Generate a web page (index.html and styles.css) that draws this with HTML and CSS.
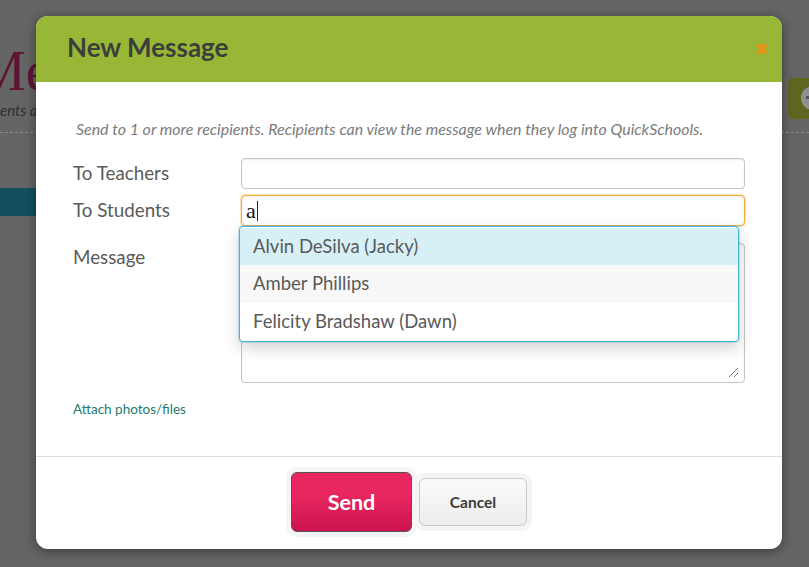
FILE: index.html
```html
<!DOCTYPE html>
<html lang="en">
<head>
    <meta charset="UTF-8">
    <title>New Message</title>
    <link rel="stylesheet" href="styles.css">
</head>
<body>
    <div class="page-behind">
        <div class="page-title">Me</div>
        <div class="page-sub">ents a</div>
        <div class="page-action"><span class="page-action-icon"></span></div>
        <div class="page-rule"></div>
        <div class="page-bar"></div>
    </div>

    <div class="modal">
        <div class="modal-header">
            <h1>New Message</h1>
            <svg class="close-icon" width="14" height="14" viewBox="0 0 14 14">
                <path d="M2.5 2.5L11.5 11.5M11.5 2.5L2.5 11.5" stroke="#ec8f12" stroke-width="3.4" fill="none"/>
            </svg>
        </div>
        <div class="modal-body">
            <p class="hint">Send to 1 or more recipients. Recipients can view the message when they log into QuickSchools.</p>
            <div class="form-row row-teachers">
                <label>To Teachers</label>
                <div class="field"></div>
            </div>
            <div class="form-row row-students">
                <label>To Students</label>
                <div class="field field-focus"><span class="typed">a</span><span class="caret"></span></div>
                <ul class="suggest">
                    <li class="active">Alvin DeSilva (Jacky)</li>
                    <li class="hover">Amber Phillips</li>
                    <li>Felicity Bradshaw (Dawn)</li>
                </ul>
            </div>
            <div class="form-row row-message">
                <label>Message</label>
                <div class="field field-area">
                    <svg class="grip" width="11" height="11" viewBox="0 0 11 11">
                        <path d="M1 10L10 1M6 10L10 6" stroke="#777" stroke-width="1" fill="none"/>
                    </svg>
                </div>
            </div>
            <a class="attach" href="#">Attach photos/files</a>
        </div>
        <div class="modal-footer">
            <button class="btn btn-send">Send</button>
            <button class="btn btn-cancel">Cancel</button>
        </div>
    </div>
</body>
</html>
```

FILE: styles.css
```css
html, body {
    margin: 0;
    height: 100%;
}
body {
    width: 809px;
    height: 567px;
    overflow: hidden;
    position: relative;
    background-color: #656565;
    font-family: "Lato", "Open Sans", sans-serif;
    color: #555;
}
.page-behind {
    position: absolute;
    inset: 0;
}
.page-title {
    position: absolute;
    left: -24px;
    top: 36px;
    font-family: "Liberation Serif", serif;
    font-size: 56px;
    line-height: 70px;
    color: #5e1535;
}
.page-sub {
    position: absolute;
    left: 0;
    top: 101px;
    font-size: 15px;
    line-height: 18px;
    font-style: italic;
    color: #2f2f2f;
}
.page-rule {
    position: absolute;
    left: 0;
    right: 0;
    top: 132px;
    border-top: 1px dashed #8a8a8a;
}
.page-bar {
    position: absolute;
    left: 0;
    width: 40px;
    top: 188px;
    height: 28px;
    background-color: #12505f;
}
.page-action {
    position: absolute;
    left: 788px;
    top: 78px;
    width: 30px;
    height: 41px;
    border-radius: 5px;
    background-color: #5f6620;
}
.page-action-icon {
    position: absolute;
    left: 13px;
    top: 8px;
    width: 24px;
    height: 24px;
    border-radius: 50%;
    background-color: #8f8f8f;
}
.page-action-icon::before {
    content: "";
    position: absolute;
    left: 5px;
    top: 10px;
    width: 14px;
    height: 3px;
    background-color: #555;
}
.modal {
    position: absolute;
    left: 36px;
    top: 16px;
    width: 746px;
    height: 533px;
    display: flex;
    flex-direction: column;
    background-color: #fff;
    border-radius: 12px;
    box-shadow: 0 2px 12px rgba(0,0,0,0.45);
}
.modal-header {
    height: 66px;
    flex: none;
    display: flex;
    align-items: center;
    justify-content: space-between;
    padding: 0 13px 0 31px;
    background-color: #98b736;
    border-radius: 12px 12px 0 0;
}
.modal-header h1 {
    margin: -4px 0 0;
    font-size: 26px;
    font-weight: 700;
    color: #3b3f3c;
}
.modal-body {
    flex: 1;
    padding: 0 37px;
}
.hint {
    margin: 38px 0 0 3px;
    font-size: 15.95px;
    line-height: 18px;
    font-style: italic;
    color: #7b7b7b;
}
.form-row {
    display: flex;
    position: relative;
}
.form-row label {
    width: 168px;
    flex: none;
    font-size: 18.8px;
    line-height: 30px;
    color: #5a5a5a;
}
.row-teachers {
    margin-top: 20px;
}
.row-students {
    margin-top: 6px;
}
.row-message {
    margin-top: 17px;
}
.row-message label {
    margin-top: -1px;
}
.field {
    flex: 1;
    box-sizing: border-box;
    height: 31px;
    border: 1px solid #c4c4c4;
    border-radius: 4px;
    background-color: #fff;
    box-shadow: inset 0 1px 2px rgba(0,0,0,0.08);
}
.field-focus {
    display: flex;
    align-items: center;
    padding-left: 4px;
    border-color: #f5ae36;
    box-shadow: 0 0 0 1px rgba(245,174,54,0.35), inset 0 1px 3px rgba(0,0,0,0.08);
}
.typed {
    font-family: "Liberation Serif", serif;
    font-size: 22px;
    color: #111;
}
.caret {
    width: 1px;
    height: 20px;
    background-color: #222;
    margin-left: 1px;
}
.field-area {
    height: 140px;
    position: relative;
}
.grip {
    position: absolute;
    right: 5px;
    bottom: 4px;
}
.suggest {
    position: absolute;
    left: 166px;
    top: 31px;
    width: 500px;
    box-sizing: border-box;
    margin: 0;
    padding: 1px 0;
    list-style: none;
    background-color: #fff;
    border: 1px solid #45b4d8;
    border-radius: 4px;
    box-shadow: 0 0 0 1px rgba(69,180,216,0.3), 0 6px 16px rgba(0,0,0,0.18);
    z-index: 5;
}
.suggest li {
    height: 37.3px;
    padding-left: 13px;
    font-size: 18.5px;
    line-height: 37px;
    color: #5a5a5a;
}
.suggest li.active {
    background-color: #d7f0f6;
}
.suggest li.hover {
    background-color: #f8f8f8;
}
.attach {
    display: block;
    margin-top: 18px;
    font-size: 13.5px;
    line-height: 16px;
    color: #1f7a72;
    text-decoration: none;
}
.modal-footer {
    flex: none;
    height: 93px;
    box-sizing: border-box;
    border-top: 1px solid #ddd;
    display: flex;
    align-items: center;
    justify-content: center;
    gap: 7px;
    padding: 0 0 2px;
}
.btn {
    font-family: inherit;
    font-weight: 700;
    box-sizing: border-box;
    cursor: pointer;
}
.btn-send {
    width: 121px;
    height: 60px;
    font-size: 21.5px;
    color: #fff;
    border: 1px solid #555;
    border-radius: 6px;
    background: linear-gradient(#e8265f 40%, #cc134f);
    box-shadow: 0 0 0 5px #f5f5f5;
}
.btn-cancel {
    width: 108px;
    height: 48px;
    font-size: 15.5px;
    color: #3d3d3d;
    border: 1px solid #c9c9c9;
    border-radius: 6px;
    background: linear-gradient(#fbfbfb, #ececec);
    box-shadow: 0 0 0 5px #f5f5f5;
}
```
